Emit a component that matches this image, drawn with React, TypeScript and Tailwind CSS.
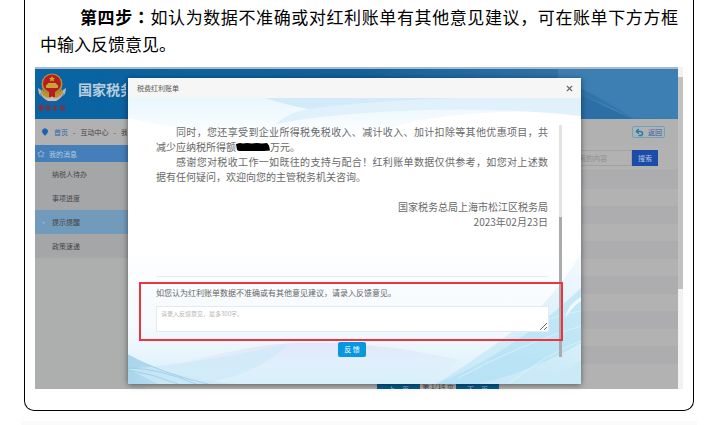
import { Star, MapPin, Undo2, X } from 'lucide-react';

const menu = ['纳税人待办', '事项进度', '提示提醒', '政策速递'];

function Emblem() {
  return (
    <svg viewBox="0 0 30 40" className="h-[40px] w-[30px] shrink-0" aria-label="中国税务">
      <path d="M1 15c0 8 6 13 14 13s14-5 14-13l-3 2c-2 5-6 7-11 7S6 22 4 17z" fill="#b3b9bc" />
      <path d="M3 20c3 6 7 8 12 8s9-2 12-8l-1 5c-3 4-7 5-11 5s-8-1-11-5z" fill="#235b9c" />
      <circle cx="15" cy="11" r="10.500" fill="#b98f33" />
      <circle cx="15" cy="10.500" r="9" fill="#b51e20" />
      <path d="M15 3l1 2h2l-1.500 1.500.5 2-2-1-2 1 .5-2L12 5h2zM9 12h12v3H9zM11 10h8l1 2H10z" fill="#cfa238" />
      <path d="M5 16c3 4 6 5 10 5s7-1 10-5l1 4c-3 4-6 5-11 5S7 24 4 20z" fill="#c0932f" />
      <path d="M12 18h6v6h-6z" fill="#b51e20" />
      <path d="M8 26h5l2-3 2 3h5l-3 2h-8z" fill="#c3c3bf" />
      <g stroke="#a8201f" strokeWidth="1" fill="none">
        <path d="M2 33h4v3H2zM4 31v8M9 33h4v4H9zM10 35h2M16 33l4 4M20 33l-4 4M18 32v6M23 33h5M24 36h4M25 32l-1 6M27 34v4" />
      </g>
    </svg>
  );
}

function Portal() {
  return (
    <div className="absolute inset-0 flex overflow-hidden bg-[#adafae] text-[7px] leading-[10px] text-[#464646]">
      <div className="flex min-w-0 flex-1 flex-col">
        <header className="relative flex h-[52px] shrink-0 items-start border-t-2 border-[#a9bac8] bg-linear-to-r from-[#0864a3] via-[#12619c] to-[#3b7cb0] pt-[4px] pl-[2px]">
          <svg viewBox="0 0 120 50" preserveAspectRatio="none" className="absolute right-0 bottom-0 h-full w-[120px]" aria-hidden="true">
            <path d="M0 10Q30 20 75 49L120 50V0H0z" fill="#3d7fb3" />
            <path d="M15 26Q40 31 62 46L74 50Q40 30 15 26z" fill="#4b86b5" />
            <path d="M0 16L75 50H0z" fill="#2c6fa7" />
          </svg>
          <Emblem />
          <h1 className="mt-[6px] ml-[11px] w-[48px] overflow-hidden text-[14px] leading-[20px] font-bold whitespace-nowrap text-[#b9cddd]">国家税务总局</h1>
        </header>
        <div className="flex h-[26px] shrink-0 items-center justify-between bg-[#b1b1b1] pr-[13px] pl-[6px]">
          <nav className="flex w-[86px] items-center gap-[5px] overflow-hidden whitespace-nowrap">
            <MapPin size={8} fill="#1764b0" color="#1764b0" className="shrink-0" />
            <a href="#home" className="text-[#2c68a8]">首页</a>
            <span>-</span>
            <a href="#interaction">互动中心</a>
            <span>-</span>
            <a href="#message">我的消息</a>
          </nav>
          <button className="flex h-[12px] w-[33px] items-center justify-center gap-[4px] rounded-xs border border-[#6ca4c0] text-[#355fa5]">
            <Undo2 size={9} strokeWidth={4} color="#217db0" />
            返回
          </button>
        </div>
        <div className="flex min-h-0 flex-1">
          <aside className="w-[110px] shrink-0">
            <h2 className="flex h-[17px] items-center gap-[4px] bg-[#457fb9] pl-[2px] text-[#b6cbdf]">
              <Star size={8} />
              我的消息
            </h2>
            <ul>
              {menu.map((item) => (
                <li key={item} className={item === '提示提醒' ? 'bg-[#729bbb]' : 'bg-[#a5a6a8]'}>
                  <a href="#menu" className="flex h-[24px] items-center">
                    <span className="w-[17px] text-center text-[#a9c6da]">{item === '提示提醒' ? '•' : ''}</span>
                    {item}
                  </a>
                </li>
              ))}
            </ul>
          </aside>
          <main className="min-w-0 flex-1 bg-[#b2b2b2]">
            <form className="flex h-[26px] items-center justify-end border-b border-[#a9a9a9] pr-[20px]">
              <input aria-label="搜索内容" placeholder="请输入搜索的内容" className="h-[16px] w-[96px] border border-[#a2a2a2] pl-[14px] text-[7px] placeholder:text-[#8e8e8e]" />
              <button type="button" className="h-[16px] w-[26px] bg-[#1c4ba8] text-[#b3c5e4]">搜索</button>
            </form>
            <ul>
              {[0, 1, 2, 3, 4, 5].map((row) => (
                <li key={row} className="mb-[17px] h-[18px] bg-[#adadb0]" />
              ))}
            </ul>
            <div className="mt-[3px] ml-[232px] flex h-[16px] items-start gap-[2px]">
              <button className="h-[16px] w-[43px] bg-[#075d8d] text-[#a5bdce]">上一页</button>
              <span className="w-[32px] text-center whitespace-nowrap">第 1/14 页</span>
              <button className="h-[16px] w-[43px] bg-[#075d8d] text-[#a5bdce]">下一页</button>
            </div>
          </main>
        </div>
      </div>
      <div className="flex w-[5px] shrink-0 flex-col bg-[#f2f2f2] pt-[10px]">
        <div className="h-[212px] bg-[#c1c1c1]" />
      </div>
    </div>
  );
}

function Waves() {
  return (
    <svg viewBox="0 0 453 286" preserveAspectRatio="none" className="absolute inset-0 h-full w-full" aria-hidden="true">
      <defs>
        <linearGradient id="base" x1="0" y1="0" x2="0" y2="1">
          <stop offset="0" stopColor="#fff" />
          <stop offset=".5" stopColor="#fff" />
          <stop offset=".8" stopColor="#f5fafe" />
          <stop offset="1" stopColor="#d8effa" />
        </linearGradient>
        <linearGradient id="top" x1="0" y1="0" x2="0" y2="1">
          <stop offset="0" stopColor="#e9f6fe" />
          <stop offset="1" stopColor="#fff" />
        </linearGradient>
        <linearGradient id="sweep" x1="0" y1="1" x2="1" y2="0">
          <stop offset="0" stopColor="#b9e2f6" />
          <stop offset=".5" stopColor="#c0e6f6" />
          <stop offset="1" stopColor="#edf7fd" />
        </linearGradient>
        <linearGradient id="lilac" x1="0" y1="0" x2="0" y2="1">
          <stop offset="0" stopColor="#e3e5fb" />
          <stop offset="1" stopColor="#d8f0fb" stopOpacity="0" />
        </linearGradient>
        <linearGradient id="fan" x1="0" y1="0" x2="1" y2="0">
          <stop offset="0" stopColor="#a8d5ec" />
          <stop offset="1" stopColor="#d3edfa" />
        </linearGradient>
      </defs>
      <path d="M0 0h453v286H0z" fill="url(#base)" />
      <path d="M0 0H453V14Q330 10 270 28Q210 46 130 40Q60 34 0 20z" fill="url(#top)" />
      <path d="M138 0Q158 7 181 11Q160 14 148 26Q210 14 300 12Q380 10 453 18V0z" fill="#e0f1fc" />
      <path d="M138 0Q158 7 181 11Q240 3 330 0z" fill="#d3eafa" />
      <path d="M40 269Q120 246 170 245Q250 243 330 262L308 286H60z" fill="url(#lilac)" />
      <path d="M0 257Q45 282 112 286H0z" fill="url(#fan)" />
      <path d="M0 271Q80 264 160 246Q120 286 50 286H30z" fill="#cdeaf8" opacity=".7" />
      <path d="M0 257Q35 276 80 286M0 270Q30 270 68 286M0 272Q25 276 50 286" stroke="#93c9e5" strokeWidth="1" fill="none" opacity=".7" />
      <path d="M308 286Q350 260 400 222Q436 186 453 155V286z" fill="url(#sweep)" opacity=".6" />
      <path d="M308 286Q385 255 453 190V245Q405 273 350 286z" fill="#aedff3" opacity=".6" />
      <path d="M360 250Q420 217 453 213M380 286Q420 255 453 243M330 280Q395 245 453 228" stroke="#e8f7fd" strokeWidth="1" fill="none" opacity=".6" />
      <path d="M420 286Q440 270 453 263V286z" fill="#c9ebf8" />
      <path d="M437 220Q440 206 453 199V203Q445 208 437 220z" fill="#eff9fe" />
    </svg>
  );
}

function Dialog() {
  return (
    <div role="dialog" aria-label="税费红利账单" className="relative mr-[102px] ml-[93px] shadow-[0_1px_6px_rgba(0,0,0,0.5)]">
      <div className="flex h-[20px] items-center justify-between bg-[#f6f6f6] pr-[7px] pl-[9px] text-[7px] text-[#555]">
        <span>税费红利账单</span>
        <button aria-label="关闭" className="text-[#666]">
          <X size={9} strokeWidth={3} />
        </button>
      </div>
      <div className="relative">
        <Waves />
        <div className="absolute top-[27px] right-[19px] bottom-[27px] w-[3px] bg-[#e3e3e3]">
          <div className="mt-[92px] h-[140px] bg-[#ababab]" />
        </div>
        <div className="relative pt-[26px] pr-[33px] pb-[27px] pl-[28px] text-[10px] leading-[15px] text-[#696969]">
          <p>
            <span className="block pl-[20px] [text-align-last:justify]">同时，您还享受到企业所得税免税收入、减计收入、加计扣除等其他优惠项目，共</span>
            <span className="flex items-center">
              减少应纳税所得额
              <svg viewBox="0 0 34 8" className="h-[8px] w-[34px]" aria-hidden="true">
                <path d="M0 1l4-1 3 .5 4-.5 5 .5 5-.5 5 .5 5-.5 2 2.500 1 5-6 .5H9L3 8 1 7z" fill="#000" />
              </svg>
              万元。
            </span>
          </p>
          <p>
            <span className="block pl-[20px] [text-align-last:justify]">感谢您对税收工作一如既往的支持与配合！红利账单数据仅供参考，如您对上述数</span>
            <span className="block">据有任何疑问，欢迎向您的主管税务机关咨询。</span>
          </p>
          <div className="mt-[15px] text-right">
            <p>国家税务总局上海市松江区税务局</p>
            <p>2023年02月23日</p>
          </div>
          <hr className="mt-[47px] border-[#e6eaec]" />
          <div className="mt-[5px] -mr-[15px] -ml-[17px] border-2 border-[#ee3340] pt-[3px] pr-[12px] pb-[7px] pl-[15px]">
            <label htmlFor="feedback" className="block text-[8px] leading-[12px] text-[#666]">
              如您认为红利账单数据不准确或有其他意见建议，请录入反馈意见。
            </label>
            <textarea
              id="feedback"
              placeholder="请录入反馈意见，最多300字。"
              className="mt-[7px] block h-[26px] w-full border border-[#e4eaed] bg-white px-[4px] py-[2px] text-[6px] leading-[10px] placeholder:text-[#b5b5b5]"
            />
          </div>
          <button className="mx-auto mt-px block h-[15px] w-[28px] rounded-xs bg-[#0797e0] text-[7px] leading-[15px] text-white">反 馈</button>
        </div>
      </div>
    </div>
  );
}

export default function App() {
  return (
    <div className="bg-white font-['Noto_Sans_CJK_SC',sans-serif] text-black">
      <article className="mx-[24px] rounded-b-[10px] border border-t-0 border-black px-[10px] pb-[21px]">
        <p className="px-[5px] pt-[3px] text-[17px] leading-[27px]">
          <span className="block pl-[40px] [text-align-last:justify]">
            <strong>第四步<span className="font-['Noto_Sans_CJK_TC',sans-serif]" lang="zh-TW">：</span></strong>
            如认为数据不准确或对红利账单有其他意见建议，可在账单下方方框
          </span>
          <span className="block">中输入反馈意见。</span>
        </p>
        <section className="relative mt-[10px] pt-[11px] pb-[5px]">
          <Portal />
          <Dialog />
        </section>
      </article>
      <div className="mx-[21px] mt-[10px] h-[4px] bg-[#fafafa]" />
    </div>
  );
}
